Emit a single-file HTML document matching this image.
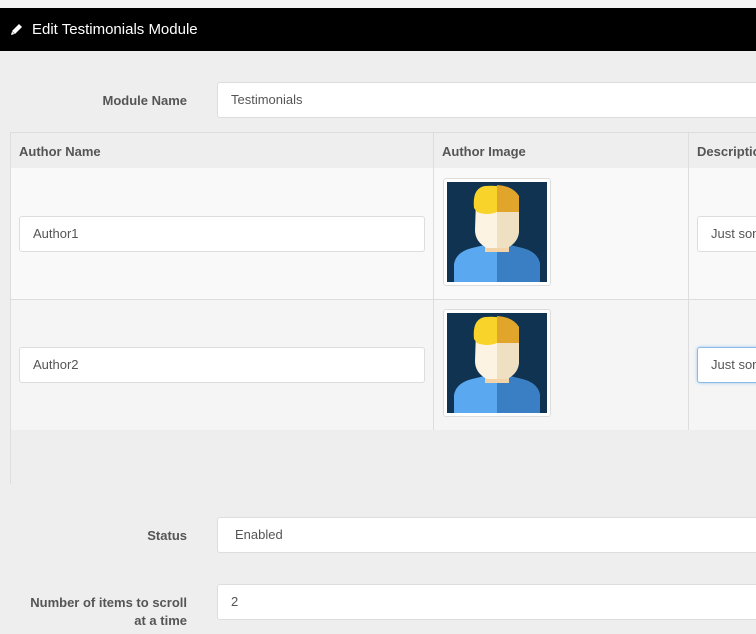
<!DOCTYPE html>
<html><head><meta charset="utf-8"><style>
*{box-sizing:border-box;margin:0;padding:0}
body{width:756px;height:634px;overflow:hidden;background:#eee;font-family:"Liberation Sans",sans-serif;font-size:13px;color:#555;position:relative}
.abs{position:absolute}
.top{left:0;top:0;width:756px;height:8px;background:#f5f5f5}
.bar{left:0;top:8px;width:756px;height:43px;background:#000;color:#fff;font-size:15px;line-height:43px;padding-left:32px}
.lbl{font-weight:bold;color:#555;text-align:right}
.inp{background:#fff;border:1px solid #ddd;border-radius:3px;height:36px;line-height:34px;padding-left:13px;color:#555}
.th{font-weight:bold;color:#555;line-height:36px;padding-left:8px}
.img{width:108px;height:108px;background:#fff;border:1px solid #ddd;border-radius:3px;padding:3px}
</style></head><body>
<div class="abs top"></div>
<div class="abs bar">Edit Testimonials Module</div>
<svg class="abs" style="left:10px;top:22px" width="14" height="14" viewBox="0 0 14 14"><path d="M2 9 L9 2 L12 5 L5 12 Z" fill="#fff"/><path d="M1 13 L2 9.5 L4.5 12 Z" fill="#fff"/></svg>
<div class="abs lbl" style="left:40px;top:93px;width:147px">Module Name</div>
<div class="abs inp" style="left:217px;top:82px;width:560px">Testimonials</div>

<div class="abs" style="left:10px;top:132px;width:760px;height:352px;border-left:1px solid #ddd"></div>
<div class="abs" style="left:10px;top:132px;width:760px;height:37px;background:#eee;border:1px solid #ddd"></div>
<div class="abs" style="left:10px;top:168px;width:760px;height:132px;background:#f9f9f9;border:1px solid #ddd;border-top:none"></div>
<div class="abs" style="left:10px;top:300px;width:760px;height:130px;background:#f5f5f5;border-left:1px solid #ddd"></div>
<div class="abs" style="left:433px;top:132px;width:1px;height:298px;background:#ddd"></div>
<div class="abs" style="left:688px;top:132px;width:1px;height:298px;background:#ddd"></div>
<div class="abs th" style="left:11px;top:134px">Author Name</div>
<div class="abs th" style="left:434px;top:134px">Author Image</div>
<div class="abs th" style="left:689px;top:134px">Description</div>

<div class="abs inp" style="left:19px;top:216px;width:406px">Author1</div>
<div class="abs inp" style="left:19px;top:347px;width:406px">Author2</div>
<div class="abs inp" style="left:697px;top:216px;width:80px">Just some</div>
<div class="abs inp" style="left:697px;top:347px;width:80px;border-color:#8bbbe8;box-shadow:0 0 3px #9cc5ee">Just some</div>

<div class="abs img" style="left:443px;top:178px"><svg width="100" height="100" viewBox="0 0 100 100"><rect width="100" height="100" fill="#0f3351"/><path d="M7 100 L7 82 Q9 70 25 66 L50 60 L75 66 Q91 70 93 82 L93 100Z" fill="#5aa8f0"/><path d="M50 60 L75 66 Q91 70 93 82 L93 100 L50 100Z" fill="#3a7fc4"/><rect x="38" y="48" width="24" height="22" fill="#f3d4a8"/><path d="M29 18 Q30 8 50 8 Q72 10 72 20 L72 48 Q72 60 60 66 L40 66 Q28 60 28 48Z" fill="#fdf3e2"/><path d="M50 8 Q72 10 72 20 L72 48 Q72 60 60 66 L50 66Z" fill="#f0e0c2"/><path d="M27 26 Q25 6 38 4 Q60 2 72 14 L72 30 L50 30 Q40 34 30 30Z" fill="#f8d42a"/><path d="M50 3 Q66 4 72 14 L72 30 L50 30Z" fill="#e0a52a"/></svg></div>
<div class="abs img" style="left:443px;top:309px"><svg width="100" height="100" viewBox="0 0 100 100"><rect width="100" height="100" fill="#0f3351"/><path d="M7 100 L7 82 Q9 70 25 66 L50 60 L75 66 Q91 70 93 82 L93 100Z" fill="#5aa8f0"/><path d="M50 60 L75 66 Q91 70 93 82 L93 100 L50 100Z" fill="#3a7fc4"/><rect x="38" y="48" width="24" height="22" fill="#f3d4a8"/><path d="M29 18 Q30 8 50 8 Q72 10 72 20 L72 48 Q72 60 60 66 L40 66 Q28 60 28 48Z" fill="#fdf3e2"/><path d="M50 8 Q72 10 72 20 L72 48 Q72 60 60 66 L50 66Z" fill="#f0e0c2"/><path d="M27 26 Q25 6 38 4 Q60 2 72 14 L72 30 L50 30 Q40 34 30 30Z" fill="#f8d42a"/><path d="M50 3 Q66 4 72 14 L72 30 L50 30Z" fill="#e0a52a"/></svg></div>

<div class="abs lbl" style="left:20px;top:528px;width:167px">Status</div>
<div class="abs inp" style="left:217px;top:517px;width:560px;padding-left:17px">Enabled</div>
<div class="abs lbl" style="left:10px;top:594px;width:177px;line-height:18px">Number of items to scroll<br>at a time</div>
<div class="abs inp" style="left:217px;top:584px;width:560px">2</div>
</body></html>
